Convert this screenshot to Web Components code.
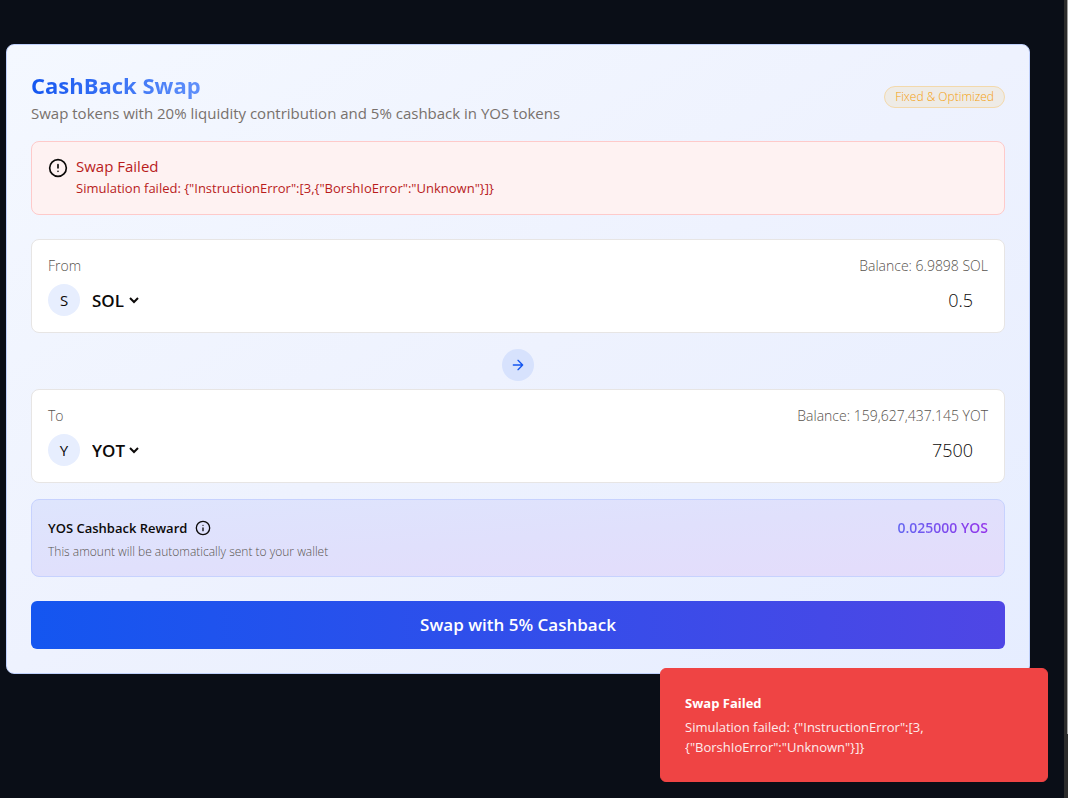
<!DOCTYPE html>
<html lang="en">
<head>
<meta charset="utf-8">
<meta name="viewport" content="width=device-width, initial-scale=1">
<title>CashBack Swap</title>
<style>
  html, body { margin: 0; min-height: 100%; }
  body { background: #0a0e17; color: #0c0a09; font: 400 16px/24px "Open Sans", "Noto Sans", sans-serif; }
</style>
</head>
<body>
<swap-page>
  <swap-card>
    <swap-header badge="Fixed &amp; Optimized">
      <span slot="title">CashBack Swap</span>
      <span slot="subtitle">Swap tokens with 20% liquidity contribution and 5% cashback in YOS tokens</span>
    </swap-header>
    <swap-alert>
      <span slot="title">Swap Failed</span>
      Simulation failed: {"InstructionError":[3,{"BorshIoError":"Unknown"}]}
    </swap-alert>
    <div class="pair">
      <token-field label="From" token="SOL" balance="6.9898" amount="0.5"></token-field>
      <swap-direction></swap-direction>
      <token-field label="To" token="YOT" balance="159,627,437.145" amount="7500"></token-field>
    </div>
    <cashback-reward amount="0.025000 YOS">
      <span slot="title">YOS Cashback Reward</span>
      This amount will be automatically sent to your wallet
    </cashback-reward>
    <swap-submit>Swap with 5% Cashback</swap-submit>
  </swap-card>
  <swap-toast slot="toast">
    <span slot="title">Swap Failed</span>
    Simulation failed: {"InstructionError":[3,{"BorshIoError":"Unknown"}]}
  </swap-toast>
</swap-page>

<script>
const define = (name, markup, setup) => {
  const template = document.createElement('template');
  template.innerHTML = '<style>*{box-sizing:border-box}</style>' + markup;
  customElements.define(name, class extends HTMLElement {
    constructor() {
      super();
      this.attachShadow({ mode: 'open' }).append(template.content.cloneNode(true));
    }
    connectedCallback() { if (setup) setup(this, this.shadowRoot); }
  });
};

define('swap-page', `
  <style>
    :host { display: block; box-sizing: border-box; min-height: 100vh; }
    main { padding: 44px 38px 44px 6px; }
    .rail { position: fixed; inset: 0 0 0 auto; width: 4px; background: #2c2c2c; }
    .rail::after { content: ""; position: absolute; top: 0; right: 0; width: 1px; height: 92%; background: #9f9f9f; }
  </style>
  <main><slot></slot></main>
  <slot name="toast"></slot>
  <div class="rail"></div>
`);

define('swap-card', `
  <style>
    :host {
      display: flex; flex-direction: column; box-sizing: border-box; padding: 24px;
      border: 1px solid #bfd0fb; border-radius: 8px;
      background: linear-gradient(to bottom right, #f4f8ff, #eef2fe 50%, #e6edff);
    }
    ::slotted(*) { margin-top: 24px; }
    ::slotted(swap-header) { margin-top: 0; }
    ::slotted(swap-alert), ::slotted(cashback-reward) { margin-top: 16px; }
  </style>
  <slot></slot>
`);

define('swap-header', `
  <style>
    :host { display: flex; justify-content: space-between; align-items: center; gap: 16px; }
    h1 {
      margin: 0; width: fit-content; font-size: 22px; line-height: 32px; font-weight: 700;
      background: linear-gradient(to right, #1456f0, #6090fa);
      -webkit-background-clip: text; background-clip: text; color: transparent;
    }
    p { margin: 0; color: #78716c; font-size: 15px; }
    .badge {
      flex: none; padding: 2px 10px; border: 1px solid #f3d9ac; border-radius: 999px;
      background: #eeebe6; color: #f59e0b; font-size: 12px; line-height: 16px; font-weight: 300;
    }
  </style>
  <div>
    <h1><slot name="title"></slot></h1>
    <p><slot name="subtitle"></slot></p>
  </div>
  <span class="badge"></span>
`, (el, root) => { root.querySelector('.badge').textContent = el.getAttribute('badge'); });

define('swap-alert', `
  <style>
    :host {
      display: flex; gap: 8px; box-sizing: border-box; padding: 16px;
      border: 1px solid #fecaca; border-radius: 8px; background: #fef2f2; color: #b91c1c;
    }
    svg { flex: none; width: 20px; height: 20px; color: #0c0a09; }
    h2 { margin: 0 0 4px; font-size: 15px; line-height: 16px; font-weight: 500; }
    p { margin: 0; font-size: 13px; line-height: 20px; }
  </style>
  <svg viewBox="0 0 24 24" fill="none" stroke="currentColor" stroke-width="2" stroke-linecap="round" stroke-linejoin="round" aria-hidden="true">
    <circle cx="12" cy="12" r="10"/><path d="M12 8v4M12 16h.01"/>
  </svg>
  <div role="alert">
    <h2><slot name="title"></slot></h2>
    <p><slot></slot></p>
  </div>
`);

define('token-field', `
  <style>
    :host {
      display: block; box-sizing: border-box; padding: 16px;
      border: 1px solid #e7e5e4; border-radius: 8px; background: #fff;
    }
    .top, .row, .pick { display: flex; align-items: center; }
    .top, .row { justify-content: space-between; }
    .top { margin-bottom: 8px; color: #57534e; font-size: 14px; line-height: 20px; font-weight: 300; }
    .pick { gap: 8px; }
    .coin {
      display: grid; place-items: center; width: 32px; height: 32px;
      border-radius: 50%; background: #e7eefe; font-size: 15px;
    }
    select {
      border: 0; padding: 0; background: transparent; color: inherit;
      font: 600 17px/24px "Open Sans", "Noto Sans", sans-serif;
    }
    input {
      width: 40%; height: 32px; padding: 0 14px; border: 1px solid transparent;
      background: transparent; color: inherit; text-align: right;
      font: 300 18px/28px "Open Sans", "Noto Sans", sans-serif;
    }
  </style>
  <div class="top"><label for="amount"></label><span class="balance"></span></div>
  <div class="row">
    <div class="pick">
      <span class="coin"></span>
      <select aria-label="Token"><option>SOL</option><option>YOT</option></select>
    </div>
    <input id="amount" type="text" inputmode="decimal">
  </div>
`, (el, root) => {
  const token = el.getAttribute('token');
  root.querySelector('label').textContent = el.getAttribute('label');
  root.querySelector('.balance').textContent = 'Balance: ' + el.getAttribute('balance') + ' ' + token;
  root.querySelector('.coin').textContent = token[0];
  root.querySelector('select').value = token;
  root.querySelector('input').value = el.getAttribute('amount');
});

define('swap-direction', `
  <style>
    :host { display: flex; justify-content: center; padding: 16px 0 8px; }
    button {
      display: grid; place-items: center; width: 32px; height: 32px; padding: 0;
      border: 0; border-radius: 50%; background: #d7e2fd; color: #1456f0;
    }
    svg { width: 16px; height: 16px; }
  </style>
  <button type="button" aria-label="Switch tokens">
    <svg viewBox="0 0 24 24" fill="none" stroke="currentColor" stroke-width="2" stroke-linecap="round" stroke-linejoin="round">
      <path d="M5 12h14M12 5l7 7-7 7"/>
    </svg>
  </button>
`);

define('cashback-reward', `
  <style>
    :host {
      display: block; box-sizing: border-box; padding: 16px;
      border: 1px solid #c7d2fe; border-radius: 8px;
      background: linear-gradient(to bottom right, #dee5fd, #e0e0fc 50%, #e4dcfb);
    }
    .row { display: flex; align-items: center; justify-content: space-between; height: 24px; margin-bottom: 4px; font-size: 14px; font-weight: 600; }
    .name { display: flex; align-items: center; gap: 8px; }
    h2 { margin: 0; font-size: 13px; font-weight: 600; }
    svg { width: 16px; height: 16px; }
    output {
      background: linear-gradient(to right, #6366f1, #9333ea);
      -webkit-background-clip: text; background-clip: text; color: transparent;
    }
    p { margin: 0; color: #57534e; font-size: 12px; line-height: 16px; font-weight: 300; }
  </style>
  <div class="row">
    <div class="name">
      <h2><slot name="title"></slot></h2>
      <svg viewBox="0 0 24 24" fill="none" stroke="currentColor" stroke-width="2" stroke-linecap="round" stroke-linejoin="round" aria-hidden="true">
        <circle cx="12" cy="12" r="10"/><path d="M12 16v-4M12 8h.01"/>
      </svg>
    </div>
    <output></output>
  </div>
  <p><slot></slot></p>
`, (el, root) => { root.querySelector('output').textContent = el.getAttribute('amount'); });

define('swap-submit', `
  <style>
    :host { display: block; }
    button {
      display: block; width: 100%; height: 48px; padding: 0; border: 0; border-radius: 6px;
      background: linear-gradient(to right, #1456f0, #4f46e5); color: #fff;
      font: 600 17px/28px "Open Sans", "Noto Sans", sans-serif;
    }
  </style>
  <button type="button"><slot></slot></button>
`);

define('swap-toast', `
  <style>
    :host {
      position: fixed; right: 20px; bottom: 16px; box-sizing: border-box;
      width: 388px; max-width: calc(100% - 40px); padding: 24px;
      border: 1px solid #ef4444; border-radius: 6px; background: #ef4444; color: #fff;
      font-size: 13px; line-height: 20px;
    }
    h2 { margin: 0 0 4px; font-size: 13px; line-height: 20px; font-weight: 700; }
    p { margin: 0; max-width: 310px; opacity: .9; }
  </style>
  <div role="status">
    <h2><slot name="title"></slot></h2>
    <p><slot></slot></p>
  </div>
`);
</script>
</body>
</html>
